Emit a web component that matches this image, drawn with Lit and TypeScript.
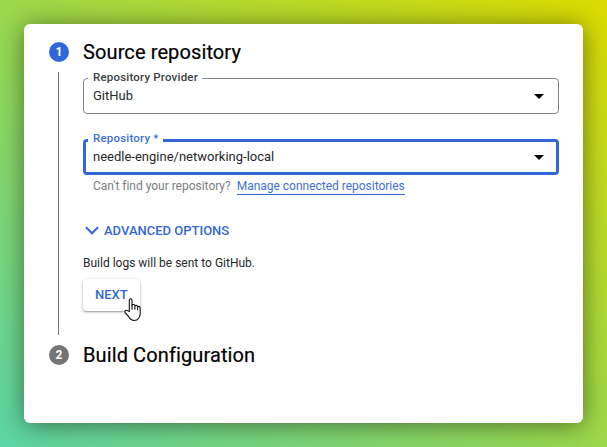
import { LitElement, html, css } from "lit";
import { customElement, property } from "lit/decorators.js";
import { classMap } from "lit/directives/class-map.js";

@customElement("select-field")
class SelectField extends LitElement {
  @property() label = "";
  @property() value = "";
  @property({ type: Boolean }) active = false;

  static styles = css`
    :host { display: block; }
    .field {
      position: relative;
      box-sizing: border-box;
      height: 36px;
      border: 1px solid #80868b;
      border-radius: 4px;
      display: flex;
      align-items: center;
      justify-content: space-between;
      padding: 0 14px 0 9px;
      font-size: 13px;
      color: #27282a;
    }
    .field.active { border: 3px solid #3367d6; padding: 0 12px 0 7px; }
    .label {
      position: absolute;
      left: 4px;
      top: -10px;
      line-height: 16px;
      padding: 0 4px 0 5px;
      background: #fff;
      font-size: 11.5px;
      font-weight: 500;
      letter-spacing: 0.2px;
      color: #3c4043;
      white-space: nowrap;
    }
    .active .label { left: 2px; top: -12px; color: #3f6fd9; }
    .value { line-height: 18px; }
    svg { display: block; }
  `;

  render() {
    return html`<div class=${classMap({ field: true, active: this.active })}>
      <span class="label">${this.label}</span>
      <span class="value">${this.value}</span>
      <svg width="10" height="5" viewBox="0 0 10 5"><path d="M0 0H10L5 5Z" fill="#000" /></svg>
    </div>`;
  }
}

@customElement("app-root")
class AppRoot extends LitElement {
  static styles = css`
    :host {
      display: block;
      box-sizing: border-box;
      width: 607px;
      height: 447px;
      padding: 24px;
      overflow: hidden;
      background: linear-gradient(to top right, #5bd5a5 0%, #9bd84b 50%, #dbdc00 100%);
      font-family: Roboto, "Liberation Sans", sans-serif;
      color: #27282a;
    }
    .card {
      box-sizing: border-box;
      width: 559px;
      height: 399px;
      padding: 16px 24px 0 25px;
      background: #fff;
      border-radius: 6px;
      box-shadow: 0 2px 24px rgba(0, 0, 0, 0.48);
    }
    .head { display: flex; align-items: center; gap: 14px; height: 24px; }
    .num {
      width: 20px;
      height: 20px;
      border-radius: 50%;
      background: #757575;
      color: #fff;
      font-size: 12px;
      font-weight: 700;
      line-height: 20px;
      text-align: center;
    }
    .num.current { background: #2f67d8; }
    h2 { margin: 0; font-size: 20px; line-height: 24px; font-weight: 400; letter-spacing: 0.11px; color: #000; -webkit-text-stroke: 0.2px #000; }
    .body {
      margin: 8px 0 8px 9px;
      box-sizing: border-box;
      height: 263px;
      border-left: 1px solid #757575;
      padding: 6px 0 0 24px;
    }
    .gap { margin-top: 25px; }
    .hint { display: flex; gap: 6px; margin: 3px 0 0 10px; font-size: 12px; line-height: 16px; color: #7b7d80; letter-spacing: -0.015px; }
    .link { color: #3f6fd9; border-bottom: 1px solid #3367d6; }
    .advanced {
      display: flex;
      align-items: center;
      gap: 5px;
      margin: 26px 0 0 2px;
      height: 18px;
      font-size: 13px;
      font-weight: 500;
      color: #3367d6;
    }
    .note { margin-top: 16px; font-size: 12px; line-height: 16px; }
    .next {
      position: relative;
      box-sizing: border-box;
      width: 57px;
      height: 32px;
      margin-top: 8px;
      padding-left: 12px;
      border-radius: 3px;
      background: #fff;
      box-shadow: 0 1px 3px rgba(0, 0, 0, 0.34), 0 1px 1px rgba(0, 0, 0, 0.12);
      font-size: 13px;
      line-height: 32px;
      font-weight: 500;
      color: #3367d6;
    }
    .cursor { position: absolute; left: 40px; top: 18px; }
    svg { display: block; }
  `;

  render() {
    return html`<main class="card">
      <div class="head"><span class="num current">1</span><h2>Source repository</h2></div>
      <section class="body">
        <select-field label="Repository Provider" value="GitHub"></select-field>
        <select-field class="gap" label="Repository *" value="needle-engine/networking-local" active></select-field>
        <div class="hint"><span>Can't find your repository?</span><span class="link">Manage connected repositories</span></div>
        <div class="advanced">
          <svg width="14" height="9" viewBox="0 0 14 9"><path d="M1 1.2L7 7.2L13 1.2" fill="none" stroke="#3367d6" stroke-width="2.1" /></svg>
          <span class="adv-text">ADVANCED OPTIONS</span>
        </div>
        <div class="note">Build logs will be sent to GitHub.</div>
        <div class="next">NEXT
          <svg class="cursor" width="20" height="26" viewBox="0 0 20 26">
            <path d="M6.3 14.4V3.2C6.3 1.2 9 1.2 9 3.2V8.2C9.6 7.1 11.7 7.3 11.9 8.8C12.6 7.9 14.4 8.2 14.6 9.7C15.6 8.9 17.2 9.6 17.2 11.2V17C17.2 19.2 16.1 20.2 15.6 21.2C14.7 22.8 13.2 23.5 11 23.5C8 23.5 7 22.2 6 20.3C5.2 18.6 3.4 17.3 2.2 15.6C1.2 13.9 2.8 12.6 4.2 13.6Z"
              fill="#fff" stroke="#111" stroke-width="1.1" stroke-linejoin="round" />
            <path d="M9 8V12.2M11.9 8.8V12.2M14.6 9.7V12.6" fill="none" stroke="#111" stroke-width="1.1" stroke-linecap="round" />
          </svg>
        </div>
      </section>
      <div class="head"><span class="num">2</span><h2>Build Configuration</h2></div>
    </main>`;
  }
}
